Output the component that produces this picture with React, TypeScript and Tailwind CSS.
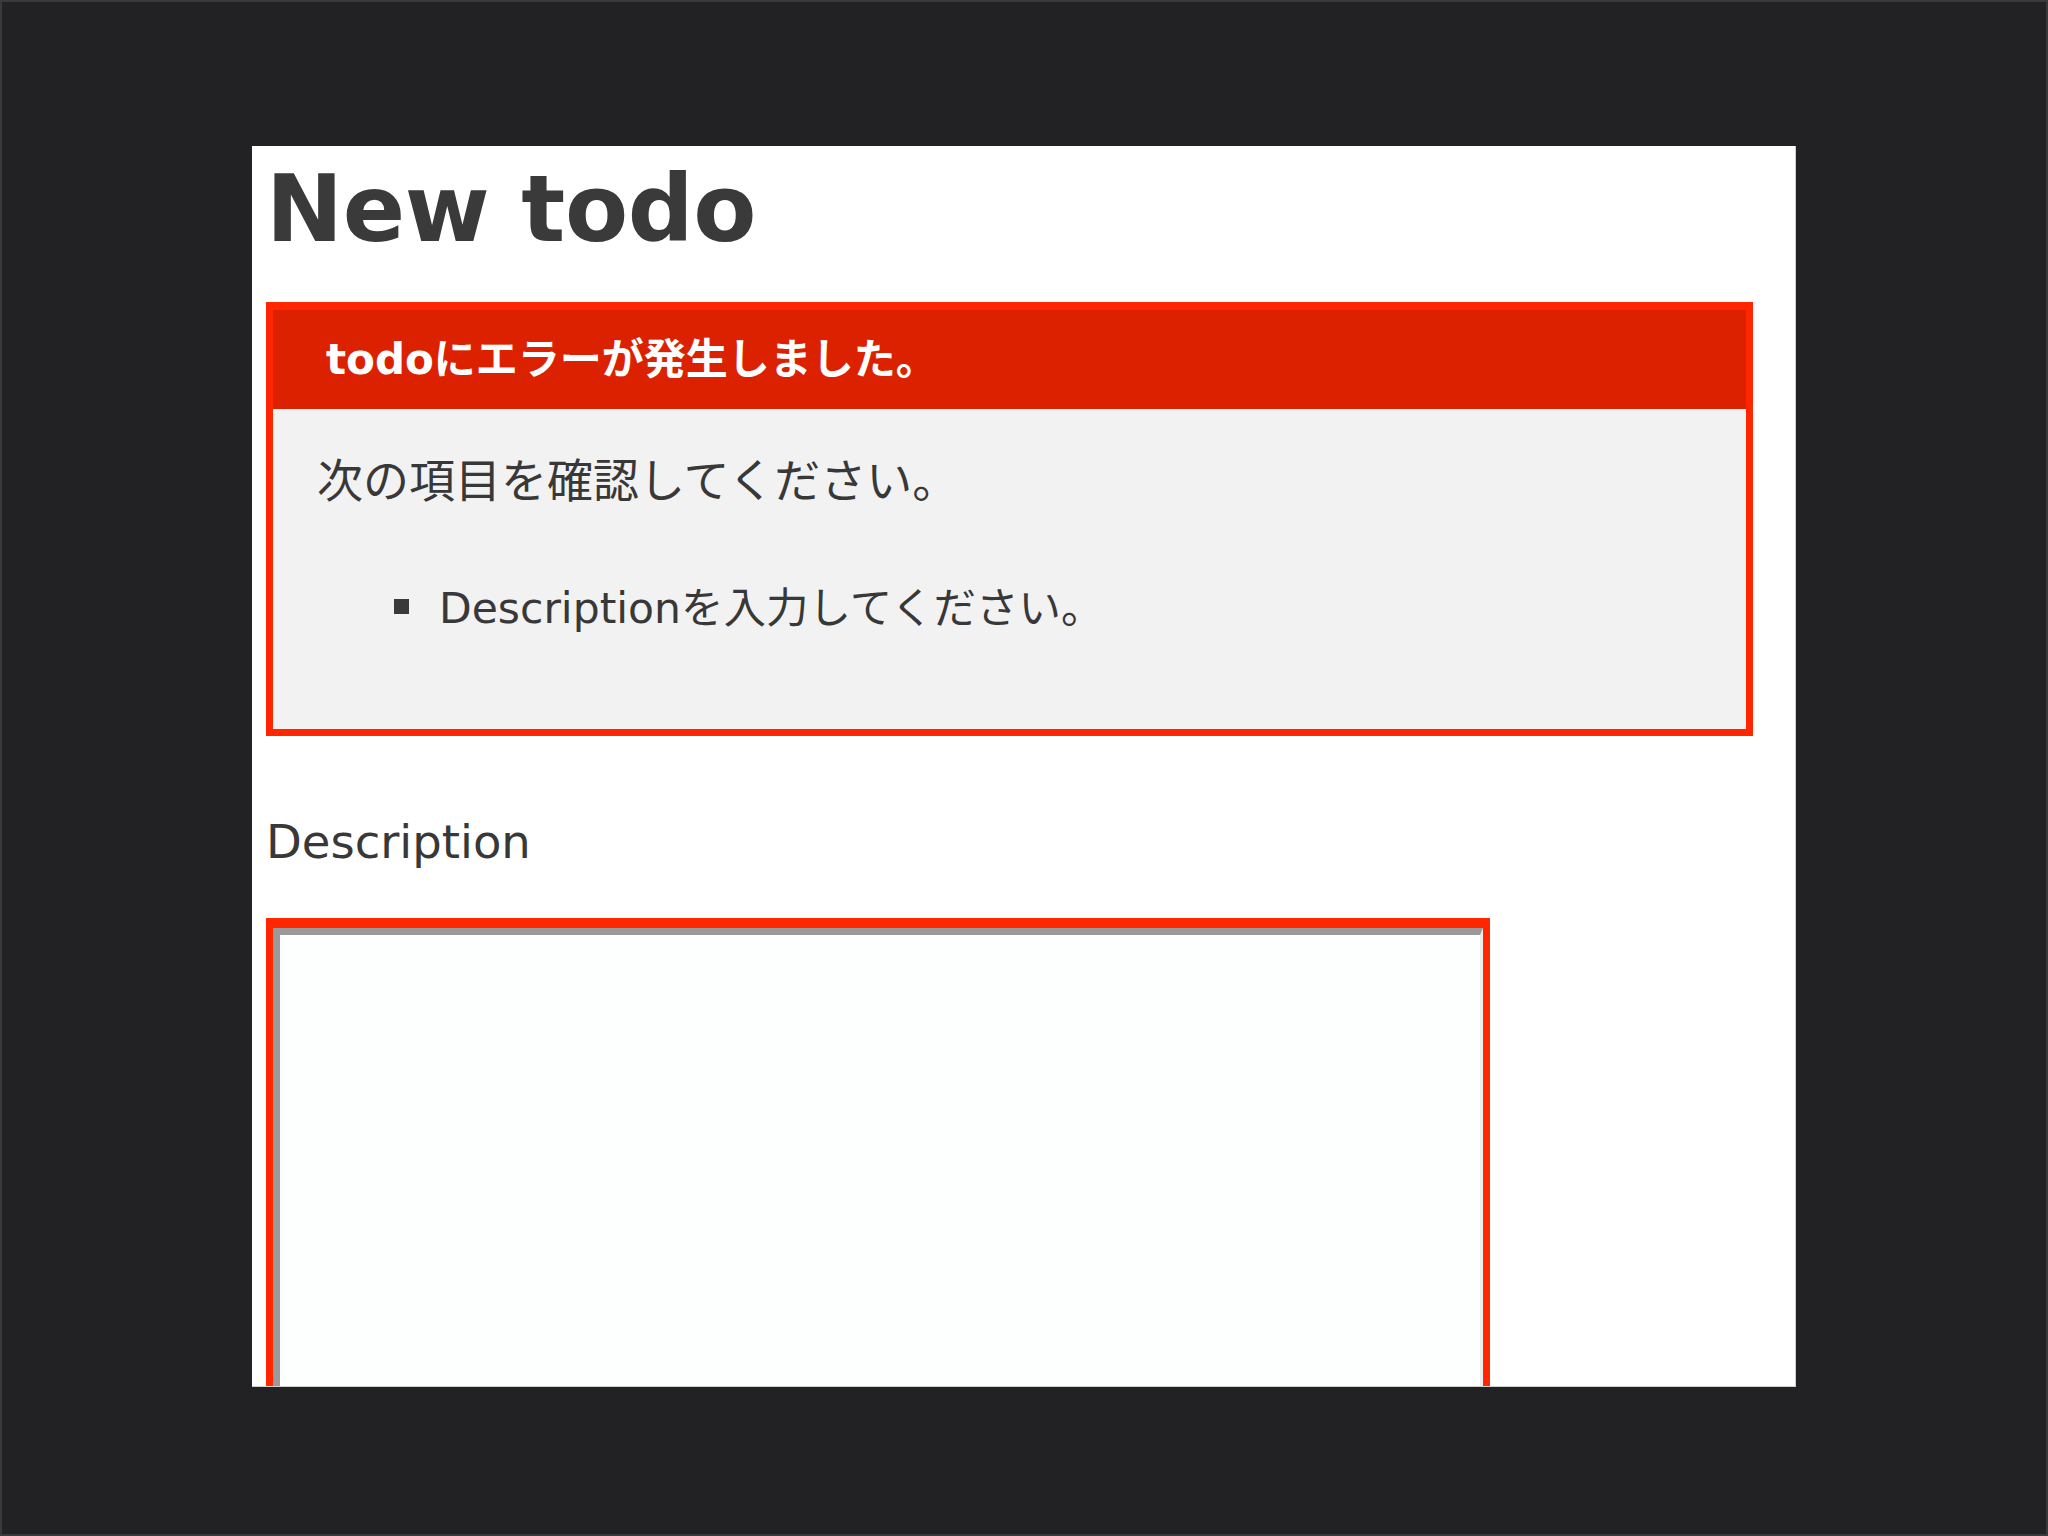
const errors = ["Descriptionを入力してください。"];

export default function App() {
  return (
    <div className="box-border flex h-[1536px] w-[2048px] justify-center border-2 border-[#3a3a3c] bg-[#222224] pt-[144px] font-['DejaVu_Sans','Noto_Sans_CJK_JP',sans-serif] text-[#383838]">
      <div className="h-[1241px] w-[1544px] overflow-hidden border-r border-b border-[#cfcfcf] bg-white pt-[18px] pr-[42px] pl-[14px]">
        <h1 className="text-[92px] leading-[92px] font-bold tracking-[-0.3px] text-[#3a3a3a]">New todo</h1>

        {/* error explanation */}
        <div className="mt-[46px] border-[7px] border-t-[8px] border-[#ff2600] bg-[#f2f2f3]">
          <h2 className="flex h-[99px] items-center bg-[#dc2100] pl-[53px] text-[42px] leading-[42px] font-bold text-white">
            todoにエラーが発生しました。
          </h2>
          <div className="pt-[42px] pb-[90px] pl-[44px]">
            <p className="text-[46px] leading-[60px]">次の項目を確認してください。</p>
            <ul className="mt-[68px]">
              {errors.map((msg) => (
                <li key={msg} className="flex h-[60px] items-center text-[42.5px] leading-[60px]">
                  <span className="mt-[-6px] ml-[77px] h-[15px] w-[15px] bg-[#3a3a3a]" />
                  <span className="ml-[30px]">{msg}</span>
                </li>
              ))}
            </ul>
          </div>
        </div>

        <label className="mt-[76px] block text-[46.5px] leading-[60px]">Description</label>

        <div className="mt-[46px] w-[1224px] bg-[#ff2600] px-[7px] pt-[10px]">
          <textarea
            className="block h-[700px] w-full resize-none border-t-[7px] border-r-[3px] border-b-[3px] border-l-[7px] border-t-[#9b9999] border-r-[#ececec] border-b-[#ececec] border-l-[#9b9999] bg-[#fdfefe] outline-none"
            defaultValue=""
          />
        </div>
      </div>
    </div>
  );
}
